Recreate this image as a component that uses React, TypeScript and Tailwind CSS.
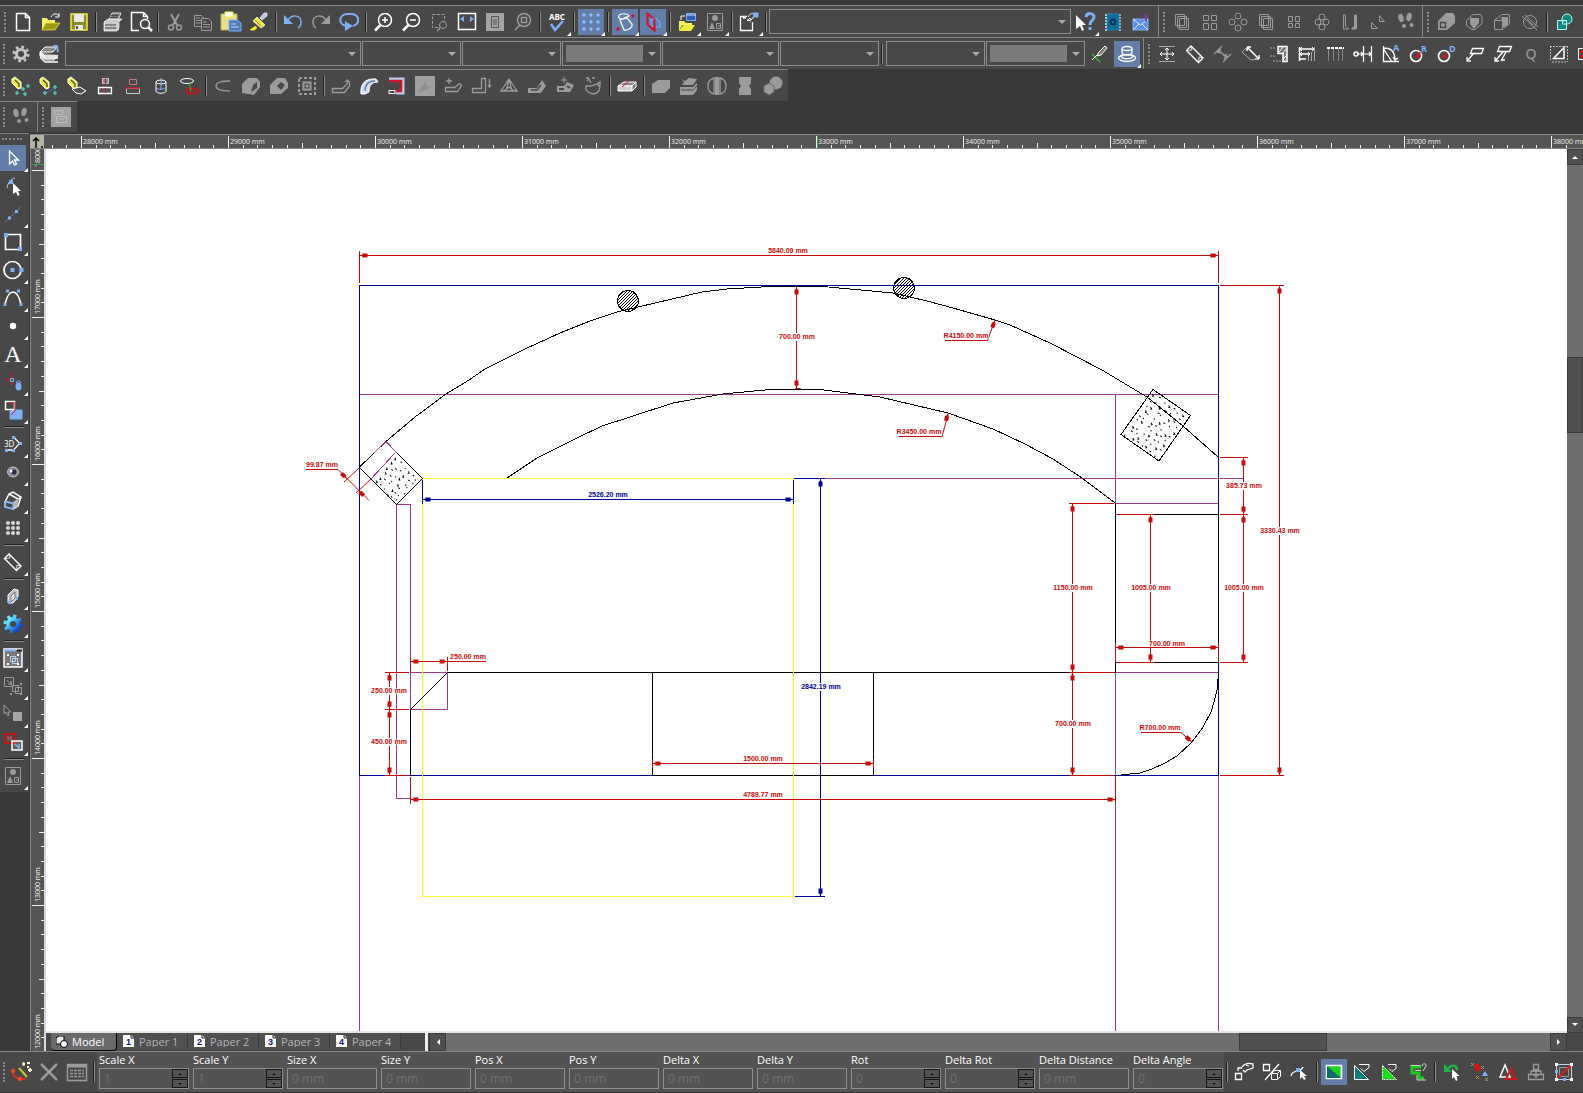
import React, { ReactNode } from "react";

const B = "#7db0f7";
const Y = "#f0ec3c";
const R = "#d0152b";

/* ---------- icons, drawn on a 20 x 20 grid ---------- */

const steps = (
  <g fill="currentColor" stroke="none">
    <ellipse cx="5" cy="6" rx="2.6" ry="4.2" transform="rotate(-15 5 6)" />
    <ellipse cx="13" cy="5" rx="2.6" ry="4.2" transform="rotate(15 13 5)" />
    <circle cx="8" cy="14" r="2" />
    <circle cx="15.500" cy="13" r="2" />
  </g>
);
const magnifier = (
  <>
    <circle cx="12" cy="8" r="6.500" strokeWidth="1.500" />
    <path d="M7.500 13 2 18.500" strokeWidth="2.500" />
  </>
);
const tag = (
  <>
    <path d="M1 3 4 1l6 5v6l-3 1-6-6z" fill={Y} stroke="#fff" />
    <path d="m4 4 4 4v3" stroke="#555" strokeWidth="1.500" />
  </>
);
const plusAt = (x: number, y: number) => (
  <path key={`${x}-${y}`} d={`M${x - 2} ${y}h4M${x} ${y - 2}v4`} stroke="#4fc3b0" strokeWidth="1.500" />
);
const shapes = (
  <>
    <path d="M2.500 1.500h15v17h-15z" />
    <g fill="currentColor" stroke="none">
      <circle cx="10" cy="6" r="3" />
      <path d="m7 10 3 7H4z" />
    </g>
    <path d="M11.500 11.500h4v5h-4zM13 14h3" />
  </>
);
const ruler = (
  <>
    <path d="M6 2 18 14l-4.500 4.500L1.500 6.500z" strokeWidth="1.400" />
    <path d="m6 2 1 4-5 .5M18 14l-4-1-.5 5" strokeWidth=".8" />
  </>
);

const icons: Record<string, ReactNode> = {
  new: <path d="M3.500 1.500h9l4 4v13h-13zM12.500 1.500v4h4" strokeWidth="1.500" />,
  open: (
    <>
      <path d="M1 6h5l1 2h7v3H5l-4 7z" fill="#f4f06a" stroke="none" />
      <path d="M5 11h14l-5 7H1z" fill="#9c9a1c" stroke={Y} strokeWidth=".7" />
      <path d="M10 5c2-4 6-4 8-1m0-3v4h-4" />
    </>
  ),
  save: (
    <>
      <path d="M2 2h16v16H2z" fill="#8c8a2a" stroke={Y} strokeWidth="1.500" />
      <path d="M5 2h10v8H5zM6 13h8v5H6z" fill="#e8e8e8" stroke="none" />
      <path d="M7 14h2v3H7z" fill="#555" stroke="none" />
    </>
  ),
  print: (
    <>
      <path d="M6 8 9 1h9l-3 7z" fill="#777" stroke="#ddd" />
      <path d="M1 10l4-3h14l-3 4v6l-2 2H1z" fill="#c9c9c9" stroke="#fff" strokeWidth=".7" />
      <path d="M2 13h11M2 16h11M8 3.500h7M7 5.500h7M16 11l3-3v6l-3 3" stroke="#444" />
    </>
  ),
  preview: (
    <>
      <path d="M8 18.500H.5v-18h12l4 4V7M12.500.5v4h4" strokeWidth="1.500" />
      <circle cx="14" cy="12" r="4.500" strokeWidth="1.500" />
      <path d="m17 15 4 4" strokeWidth="2.500" />
    </>
  ),
  cut: (
    <>
      <path d="m6 2 6 11M14 2 8 13" strokeWidth="2" />
      <circle cx="6" cy="15.500" r="2.500" strokeWidth="1.500" />
      <circle cx="14" cy="15.500" r="2.500" strokeWidth="1.500" />
    </>
  ),
  copy: (
    <>
      <path d="M1.500 3.500h7l3 3v8h-10z" />
      <path d="M8.500 6.500h7l3 3v9h-10z" fill="#484848" />
      <path d="M3 6h4M3 8.500h5M3 11h5M10 10h4M10 12.500h7M10 15h7" />
    </>
  ),
  paste: (
    <>
      <path d="M0 2h16v16H0z" fill="#e6e08a" stroke="#b9b35c" />
      <path d="M4 0h8v5H4z" fill="#fff" stroke={Y} />
      <path d="M8 8h8l4 3v8H8z" fill="#4f79b5" stroke={B} />
      <path d="M10 12h5M10 15h8" stroke="#cfe2ff" />
    </>
  ),
  brush: (
    <>
      <path d="M15 1h3v3l-5 4-2-2z" fill="#b8cbe6" stroke="#fff" strokeWidth=".6" />
      <path d="m8 5 8 8-4 3-8-7z" fill={Y} stroke="#fff" strokeWidth=".7" />
      <path d="m6 8 6 6" stroke="#8c8a2a" />
      <path d="M1 17c3 0 3-3 6-3l1 2c-2 3-5 3-7 2z" fill="#f7f71c" stroke="none" />
    </>
  ),
  undo: (
    <>
      <path d="M1 3v9h9z" fill={B} stroke="none" />
      <path d="M5 8c4-6 13-5 13 2 0 3-1 5-3 6" stroke={B} strokeWidth="1.500" />
    </>
  ),
  redo: (
    <>
      <path d="M19 3v9h-9z" fill="currentColor" stroke="none" />
      <path d="M15 8C11 2 2 3 2 10c0 3 1 5 3 6" strokeWidth="1.500" />
    </>
  ),
  repeat: (
    <>
      <path d="M8 14C-1 13-1 3 8 2h5c8 1 8 10 1 12" stroke={B} strokeWidth="2" />
      <path d="M6 9v10l8-5z" fill={B} stroke="none" />
    </>
  ),
  zoomin: (
    <>
      {magnifier}
      <path d="M12 5v6M9 8h6" strokeWidth="1.500" />
    </>
  ),
  zoomout: (
    <>
      {magnifier}
      <path d="M9 8h6" strokeWidth="1.500" />
    </>
  ),
  zoomwin: (
    <>
      <path d="M3.500 2.500h12v13h-12z" strokeDasharray="3 1.500" />
      <circle cx="14" cy="13" r="3.500" fill="#484848" />
      <path d="m11 16-3 3" strokeWidth="1.500" />
    </>
  ),
  extents: (
    <>
      <path d="M1.500 1.500h17v16h-17z" strokeWidth="1.500" />
      <path d="M7 4v6L3 7zM13 4v6l4-3z" fill={B} stroke="none" />
    </>
  ),
  page: (
    <>
      <path d="M1 1h18v18H1z" fill="#a4a4a4" stroke="none" />
      <path d="M6.500 4.500h7v11h-7zM8 8h4M8 10h4M8 12h4" stroke="#555" />
    </>
  ),
  zoomsel: (
    <>
      <circle cx="11" cy="8" r="6.500" strokeWidth="1.500" />
      <path d="M8.500 5.500h5v5h-5zM7 13l-5 5" strokeWidth="1.500" />
    </>
  ),
  spell: (
    <>
      <text x="10" y="8" fontSize="8" fontWeight="bold" textAnchor="middle" fill="#fff" stroke="none">
        ABC
      </text>
      <path d="m4 12 4 6 8-9" stroke={B} strokeWidth="2.500" />
    </>
  ),
  grid: (
    <g fill="#8fc0ff" stroke="none">
      {[3, 10, 17].map((y) => [3, 10, 17].map((x) => <circle key={`${x}${y}`} cx={x} cy={y} r="1.700" />))}
    </g>
  ),
  snap: (
    <>
      <path d="M4 4c0-3 9-3 10 0L7 7C4 7 3 5 4 4zM5 8l7-2 5 6c1 3-4 7-8 6z" strokeWidth="1.200" />
      <circle cx="18" cy="4" r="1.800" fill={R} stroke="none" />
      <circle cx="3" cy="17" r="1.800" fill={R} stroke="none" />
    </>
  ),
  plane: (
    <>
      <path d="M4.500 1.500v11l7 6v-11z" stroke={R} strokeWidth="2" />
      <path d="M8 7h6l3 3v5h-7l-2-2z" fill="#5d84c4" stroke={B} />
      <path d="M11.500 7v11" stroke={R} strokeWidth="2" />
    </>
  ),
  layerset: (
    <>
      <path d="M9.500 1.500h9v7h-9z" fill="#2f5fae" stroke={B} />
      <path d="M9 3h10" stroke="#cfe2ff" />
      <path d="M2 9h5l2 2h6v2H5l-3 6z" fill="#f7f46a" stroke="none" />
      <path d="M6 13h12l-4 6H2z" fill={Y} stroke="none" />
      <path d="M4 8V4h4" />
    </>
  ),
  shapes,
  props: (
    <>
      <path d="M8 4.500H1.500v14h12V10M4 6h3" strokeWidth="1.300" />
      <path d="M9 5c2-4 5-4 8-3l-5 6-1-2-3 3M8 8l4 1" />
      <path d="M14 1h5v4h-4z" fill={B} stroke={B} />
    </>
  ),
  help: (
    <>
      <path d="M1 3v14l4-3 2 5 2-1-2-5h4z" fill="#fff" stroke="none" />
      <path d="M11 5c1-5 8-4 8 0 0 4-4 3-4 8M15 15v3" stroke={B} strokeWidth="3" />
    </>
  ),
  book: (
    <>
      <path d="M4 2h12v16H4z" fill="#0a6c9e" stroke="#1683b5" />
      <path d="M3 2v17" stroke="#dfe9ee" strokeWidth="1.500" strokeDasharray="2 1" />
      <path d="M17 2v17" stroke="#b7c4ca" strokeWidth="1.500" strokeDasharray="2 1" />
      <circle cx="10" cy="10" r="2.500" stroke="#052c48" strokeWidth="1.500" />
    </>
  ),
  mail: (
    <>
      <path d="M2 7h15v11H2z" fill="#5c8fe6" stroke={B} />
      <path d="m2 7 7.500 6L17 7M2 18l6-6M17 18l-6-6" stroke="#dbe9ff" />
      <path d="m12 5 3-4 3 4h-2v4h-2V5z" fill="#7a3b95" stroke="none" />
    </>
  ),
  dup: <path d="M3.500 2.500h9v11h-9zM5.500 4.500h9v11h-9zM7.500 6.500h9v11h-9z" />,
  array4: <path d="M3.500 3.500h5v5h-5zM11.500 3.500h5v5h-5zM3.500 11.500h5v6h-5zM11.500 11.500h5v6h-5z" />,
  polar: (
    <>
      <circle cx="10" cy="4" r="3" />
      <circle cx="4" cy="10" r="3" />
      <circle cx="16" cy="10" r="3" />
      <circle cx="10" cy="16" r="3" />
    </>
  ),
  arraysm: <path d="M4.500 4.500h4v5h-4zM11.500 4.500h4v5h-4zM4.500 11.500h4v4h-4zM11.500 11.500h4v4h-4z" />,
  flower: (
    <>
      <circle cx="10" cy="5" r="3" />
      <circle cx="6" cy="10" r="3" />
      <circle cx="14" cy="10" r="3" />
      <circle cx="10" cy="15" r="3" />
    </>
  ),
  mirror: (
    <>
      <path d="M3.500 3v14h5l-3-3V3z" />
      <path d="M16.500 3v14h-5l3-3V3z" fill="currentColor" />
    </>
  ),
  triangles: (
    <>
      <path d="M3.500 10.500v6h6z" />
      <path d="M11.500 3.500v6h5z" />
    </>
  ),
  steps,
  union: (
    <>
      <path d="M2 9 10 1h7l2 3v7l-8 7H2z" fill="currentColor" stroke="none" />
      <path d="M4.500 10.500h5v5h-5z" stroke="#484848" strokeWidth="1.500" />
    </>
  ),
  subtract: (
    <>
      <path d="M6 6h9v5l-5 6-4-5z" fill="currentColor" stroke="none" />
      <path d="M2.500 8.500 9 2.500h8l1 3v6l-7 6h-3l-5.500-4z" />
    </>
  ),
  intersect: (
    <>
      <path d="M10 5h6v8l-6 3z" fill="currentColor" stroke="none" />
      <path d="M2.500 8.500h8v9h-8zM2.500 8.500l7-6h8v9l-6 5M8 6h8" />
    </>
  ),
  slice: (
    <>
      <circle cx="10" cy="10" r="6.500" />
      <path d="m2 4 15 14M5 3l13 12M7 7l6 6" />
    </>
  ),
  join: (
    <>
      <circle cx="13" cy="7" r="5" fill="#0c8a80" stroke="#bff5ef" />
      <path d="M3.500 8.500h9v9h-9z" fill="#0c8a80" stroke="#bff5ef" />
      <path d="M8.500 12V9l4-.5V12z" fill="#0c8a80" stroke="#bff5ef" />
    </>
  ),
  joinb: <path d="M2 7h14v11H2z" fill={B} stroke="none" />,
  gear: (
    <g stroke="#c4c4c4">
      <circle cx="10" cy="10" r="4.500" strokeWidth="3" />
      <circle cx="10" cy="10" r="7" strokeWidth="3" strokeDasharray="2.750 2.750" />
    </g>
  ),
  layers: (
    <>
      <path d="m1 8 5-5h12l-4 5zM1 8v4l6 4h8l4-5" fill="#888" />
      <path d="m1 10 5 4h13M1 13l5 5h13M1 8l5 4h13" strokeWidth="1.500" />
      <path d="M14 2h4l1 6" stroke={B} strokeWidth="2" />
    </>
  ),
  pencil: (
    <>
      <path d="m3 10 8 8" stroke="#35c435" strokeWidth="1.500" />
      <path d="m8 12 2-4 6-6 2 2-6 7z" fill="#777" />
      <path d="m3 16 5-5" />
    </>
  ),
  pancake: (
    <>
      <ellipse cx="10" cy="14" rx="8.500" ry="3.500" strokeWidth="1.300" />
      <path d="M4 11c0 5 12 5 12 0M5 5v3c0 4 10 4 10 0V5" strokeWidth="1.300" />
      <ellipse cx="10" cy="4.500" rx="5" ry="2" strokeWidth="1.300" />
    </>
  ),
  dimall: (
    <>
      <path d="M2 2.500h16M2 17.500h16" stroke="#aaa" />
      <path d="M10 4v12M3 10h14M8 6l2-2 2 2M8 14l2 2 2-2M5 8l-2 2 2 2M15 8l2 2-2 2" />
    </>
  ),
  ruler,
  dimpar: <path d="m1 10 8-8M10 18l8-8M4 6l11 7M8 5l-3 4M14 10l-3 5M4 8l5 1M10 11l4 2" strokeWidth="1.300" />,
  dimalign: (
    <>
      <path d="m6 3 12 12M6 3v4M6 3h4M18 15v-4M18 15h-4" strokeWidth="1.500" />
      <path d="m6 3-5 5 9 8 7-1" stroke="#aaa" />
    </>
  ),
  dimhatch: (
    <>
      <path d="M9 2.500h9v15h-4v-8H9z" fill="#777" strokeWidth="1.500" />
      <path d="m10 8 4-5M13 10l5-6M14 15l4-4" />
      <path d="M1 4h6M1 12h6M4 17h9" stroke="#aaa" strokeDasharray="2 1" />
    </>
  ),
  dimbase: (
    <>
      <path d="M2.500 3v14M2 5h15M3 10h10M3 15h6" strokeWidth="1.500" />
      <path d="m5 3-2 2 2 2M15 3l2 2-2 2M5 8l-2 2 2 2M11 8l2 2-2 2" />
      <path d="M17.500 3v14M14.500 8v9M11.500 12v5" stroke="#aaa" />
    </>
  ),
  dimcont: (
    <>
      <path d="M3.500 4v13M8.500 4v13M13.500 4v13M17.500 4v13" stroke="#888" />
      <path d="M2 4h17" strokeWidth="2" strokeDasharray="3 1" />
    </>
  ),
  dimord: (
    <>
      <circle cx="3" cy="10" r="2" strokeWidth="1.500" />
      <path d="M5 10h14M10.500 2v16M18.500 2v16M8 8l2 2-2 2M16 8l2 2-2 2" strokeWidth="1.200" />
    </>
  ),
  dimang: (
    <>
      <path d="M2.500 2v15.500H18M2.500 5l8 12M3 4c8 0 11 4 11 12M12 13l2 3 3-2" strokeWidth="1.300" />
      <text x="12" y="7" fontSize="9" fontWeight="bold" fill={B} stroke="none">A</text>
    </>
  ),
  dimrad: (
    <>
      <circle cx="7" cy="12" r="5.500" strokeWidth="1.700" />
      <path d="M6 13l5-5v5z" fill={R} stroke={R} />
      <text x="12" y="8" fontSize="9" fontWeight="bold" fill={B} stroke="none">R</text>
    </>
  ),
  dimdia: (
    <>
      <circle cx="7" cy="12" r="5.500" strokeWidth="1.700" />
      <path d="M4 14l5-5v4z" fill={R} stroke={R} />
      <text x="12" y="8" fontSize="9" fontWeight="bold" fill={B} stroke="none">D</text>
    </>
  ),
  leader: <path d="M7.500 4.500h11l-2 5h-11zM9 9l-7 8M2 13v4h4" strokeWidth="1.300" />,
  leader2: <path d="M6.500 2.500h12l-2 5h-12zM10 8l-8 9M2 13v4h4M13 8l-5 9M9 16h3" strokeWidth="1.300" />,
  q: <text x="10" y="15" fontSize="14" textAnchor="middle" fill="#a0a0a0" stroke="none">Q</text>,
  dimdiag: (
    <>
      <path d="M4.500 14.500 15 3.500v11z" strokeWidth="1.500" />
      <path d="M1 2.500h17M1.500 2v14M18.500 2v16M3 18h14" stroke="#bbb" strokeDasharray="2 1" />
    </>
  ),
  redtable: (
    <>
      <path d="M1.500 4.500h17v11h-17z" stroke="#fff" />
      <path d="M3 6h5v3H3zM3 11h5v3H3z" fill="#d01" stroke="none" />
    </>
  ),
  tag1: (
    <>
      {tag}
      {plusAt(6, 17)}
      {plusAt(12, 13)}
      {plusAt(17, 10)}
      {plusAt(14, 18)}
    </>
  ),
  tag2: (
    <>
      {tag}
      <path d="M6 17 17 12" stroke="#3a73c9" />
      {plusAt(6, 17)}
      {plusAt(16, 17)}
      {plusAt(16, 11)}
    </>
  ),
  tag3: (
    <>
      {tag}
      <path d="m5 13 8-2 6 4-5 3-5-1z" fill="#555" />
    </>
  ),
  stamp: (
    <>
      <path d="M7.500 2.500h6v5h-6z" fill="#888" stroke="#ccc" />
      <path d="M3.500 11.500h13v6h-13z" fill="#555" stroke="#fff" strokeWidth="1.300" />
      <path d="M10.500 1v8M10.500 12v5" stroke={R} />
    </>
  ),
  stampred: (
    <>
      <path d="M6.500 3.500h7v5h-7z" stroke="#c9777f" />
      <path d="M3.500 12.500h13v5h-13z" stroke="#ccc" />
      <path d="M3 12h14" stroke={R} strokeWidth="1.500" />
    </>
  ),
  cylinder: (
    <>
      <path d="M5 6v9c0 3 10 3 10 0V6" />
      <ellipse cx="10" cy="6" rx="5" ry="2" />
      <path d="M5 11c0 3 10 3 10 0M10 2v12" stroke={B} />
    </>
  ),
  revolve: (
    <>
      <ellipse cx="8" cy="5" rx="6.500" ry="2.500" />
      <ellipse cx="13" cy="15" rx="6" ry="2.500" stroke="#c01818" strokeWidth="2" />
      <path d="m10 6 2 9" stroke="#35c435" />
    </>
  ),
  curve: <path d="M17 5c-7 0-14 1-14 5s7 5 14 5" strokeWidth="1.300" />,
  solid1: (
    <>
      <path d="M1 8 7 2h9l3 4v5l-6 8-12-2z" fill="currentColor" stroke="none" />
      <path d="m12 9 4-3v6l-6 4z" fill="#484848" stroke="none" />
    </>
  ),
  solid2: (
    <>
      <path d="M1 9 8 2h8l3 5v5l-7 6H1z" fill="currentColor" stroke="none" />
      <path d="m8 10 4-4 4 3-4 5z" fill="#484848" stroke="none" />
    </>
  ),
  marquee: (
    <>
      <path d="M2 2h16v16H2z" strokeWidth="2" strokeDasharray="3 2" />
      <path d="M6.500 6.500h7v7h-7z" strokeWidth="2" />
      <path d="M9 9h2v2H9z" fill="currentColor" />
    </>
  ),
  sweep: <path d="M1.500 12.500h10l5-5V4l2 2v4l-5 6.500h-12zM14 6l3-2" strokeWidth="1.300" />,
  pipe: (
    <>
      <path d="M2 18C1 8 6 2 17 3l2 3c-7 0-9 4-9 10l-4 2z" fill="#cfe0f5" stroke="#fff" />
      <path d="M6 15C6 8 10 5 16 5" stroke="#6b7f99" strokeWidth="1.500" />
    </>
  ),
  channel: (
    <>
      <path d="M2 3h14v14H9" stroke="#b9cdea" strokeWidth="3" />
      <path d="M2 5h12v10H8" stroke={R} strokeWidth="2.500" />
      <path d="M2 14.500h6v3H2z" stroke="#fff" fill="#484848" />
    </>
  ),
  facet: (
    <>
      <path d="M0 0h20v20H0z" fill="#a0a0a0" stroke="none" />
      <path d="m3 17 7-11 2 5 6-1-8 4z" fill="#8c8c8c" stroke="none" />
    </>
  ),
  bend1: <path d="M6 2v6M3 5h6M2.500 11.500h9l5-4 2 2-4 6h-12z" strokeWidth="1.300" />,
  bend2: <path d="M1.500 12.500h9v-10h4v14h-13zM18.500 3v8M17 9l1.500 2L20 9" strokeWidth="1.300" />,
  cone: <path d="m10 3 8 12H2zM10 3l3 12H7zM5 15l5-4 5 4" strokeWidth="1.300" />,
  bend3: (
    <>
      <path d="M1 12h9l5-8 4 6-5 7H1z" fill="currentColor" stroke="none" />
      <path d="M4 14h6l4-5M14 3l1-2" stroke="#484848" strokeWidth="1.500" />
    </>
  ),
  bend4: (
    <>
      <path d="M2 10h7l3-4 7 3-4 7H2z" fill="currentColor" stroke="none" />
      <path d="M4 13h5M12 10l3 2" stroke="#484848" strokeWidth="2" />
      <path d="M9 1v6M6 4h6" />
    </>
  ),
  twist: <path d="M3 2h3M9 2h3M4 5l2-2 2 4M3 10c-2 8 13 12 14 1l-3-3-6 2zM14 8l3-2v4" strokeWidth="1.300" />,
  section: (
    <>
      <path d="m1 10 6-4h12l-4 4z" fill="#8a8a8a" stroke="#fff" />
      <path d="M1 10h14v5H1z" fill="#cfcfcf" stroke="#fff" />
      <path d="m15 10 4-4v5l-4 4z" fill="#777" stroke="#fff" />
      <path d="m5 11 9-8" stroke={R} />
    </>
  ),
  box: <path d="m1 8 6-4h12v8l-5 5H1z" fill="currentColor" stroke="none" />,
  boxcurve: (
    <>
      <path d="M1 11h13l4-4v7l-4 5H1z" fill="currentColor" stroke="none" />
      <path d="m2 3 4 2 4-3 8 1-4 6H3l2-3z" fill="currentColor" stroke="none" />
      <path d="M2 14h12l4-4" stroke="#484848" />
    </>
  ),
  mirrorc: (
    <>
      <path d="M7 2v16C-1 16-1 4 7 2zM13 2v16c8-2 8-14 0-16z" strokeWidth="1.300" />
      <path d="M8 1h4v18H8z" fill="currentColor" stroke="none" />
    </>
  ),
  column: <path d="M4 1h12v6l-2 3 2 3v6H4v-6l2-3-2-3z" fill="currentColor" stroke="none" />,
  cubeball: (
    <>
      <circle cx="13" cy="7" r="6.500" fill="currentColor" stroke="none" />
      <path d="m1 10 5-3 5 3v6l-5 3-5-3z" fill="currentColor" stroke="#6a6a6a" />
    </>
  ),
  panel: (
    <>
      <path d="M0 0h20v20H0z" fill="#a2a2a2" stroke="none" />
      <path d="M3.500 3.500h8v4h-8zM5.500 9.500h10v6h-10zM8 12h5" stroke="#bdbdbd" />
    </>
  ),
  cursor: <path d="M6.500 3v13l3-3 2 4 2-1-2-4h4z" fill="#6681ab" strokeWidth="1.300" />,
  node: (
    <>
      <path d="M4 12c1-6 4-9 8-10" stroke="#ccc" />
      <path d="M6 4h4v4H6z" fill={B} stroke="none" />
      <path d="M10 7v11l3-2 2 4 1.500-1L15 15h3z" fill="#fff" stroke="none" />
    </>
  ),
  line: (
    <>
      <path d="M2 18 18 3" stroke="#7d8a9c" strokeDasharray="2 1" />
      <path d="M5 12.500h3v3H5zM12 6h3v3h-3z" fill={B} stroke="none" />
    </>
  ),
  rect: (
    <>
      <path d="M2.500 2.500h15v15h-15z" strokeWidth="1.700" />
      <path d="M1 1h4v4H1zM15 15h4v4h-4z" fill={B} stroke="none" />
    </>
  ),
  circle: (
    <>
      <circle cx="9.500" cy="10" r="8.500" strokeWidth="1.700" />
      <path d="M7.500 8h4v4h-4zM16.500 8h4v4h-4z" fill={B} stroke="none" />
    </>
  ),
  arc: (
    <>
      <path d="M2 16C4 8 7 4 10 4s6 4 8 12" strokeWidth="1.700" />
      <path d="M.5 15h3v3h-3zM16.500 15h3v3h-3zM3 1.500h3v3H3zM14 1.500h3v3h-3z" fill={B} stroke="none" />
    </>
  ),
  dot: <circle cx="10" cy="10" r="3.200" fill="#fff" stroke="none" />,
  text: (
    <text x="10" y="18" fontSize="24" textAnchor="middle" fill="#fff" stroke="none" fontFamily="Liberation Serif, serif">
      A
    </text>
  ),
  lock: (
    <>
      <path d="M8.500 1v4M8.500 10v3M2 7.500h5" stroke={R} strokeWidth="1.500" />
      <path d="M7.500 6.500h3v3h-3z" stroke={B} />
      <ellipse cx="15.500" cy="14.500" rx="3" ry="4" fill={B} stroke="none" />
      <path d="M13.500 11c0-3 4-3 4 0" stroke={B} />
    </>
  ),
  copyred: (
    <>
      <path d="M7 10h12v9H7z" fill={B} stroke={B} />
      <path d="M2.500 1.500h9v8h-9z" strokeWidth="1.500" />
      <path d="M5 3h7v8l-4 4" stroke={R} />
    </>
  ),
  threed: (
    <>
      <text x="1" y="13" fontSize="8" fill="#fff" stroke="none">3D</text>
      <path d="M11 4c2 0 3 4 6 5-3 2-4 6-7 7H4" strokeWidth="1.300" />
      <path d="M9 2h3v3H9zM16 8h3v3h-3zM9 15h3v3H9zM2 15h3v3H2z" fill={B} stroke="none" />
    </>
  ),
  sphere: (
    <>
      <ellipse cx="10" cy="10" rx="5.500" ry="5" fill="#8a8a9c" stroke="#c4c4d0" />
      <circle cx="11" cy="10" r="2.500" fill="#2a2a40" stroke="none" />
      <circle cx="8" cy="9" r="1.500" fill="#fff" stroke="none" />
    </>
  ),
  prism: (
    <>
      <path d="m2 12 4-8 4-2 8 5-3 9-5 3-8-2z" strokeWidth="1.500" />
      <path d="m6 4 9 5 3-2M2 12l9 1" strokeWidth="1.500" />
      <path d="m10 12 6-4-2 9-4 1z" fill="#b8b8b8" stroke="none" />
      <path d="m2 12 8 1v6l-8-2z" stroke={B} strokeWidth="1.500" />
    </>
  ),
  balls: (
    <g fill="#d6d6d6" stroke="none">
      {[5, 10, 15].map((y) => [5, 10, 15].map((x) => <circle key={`${x}${y}`} cx={x} cy={y} r="2" />))}
    </g>
  ),
  slab: (
    <>
      <path d="m5 9 6-6 4 1v7l-5 6H5z" fill="#b9bec6" stroke="#fff" />
      <path d="m8 10 4-4v6l-4 4z" fill="#e6e6e6" stroke="#777" />
      <path d="M5 15h3v3H5zM13 11h2v3h-2z" fill={B} stroke="none" />
    </>
  ),
  gearblue: (
    <>
      <defs>
        <linearGradient id="gearFill" gradientUnits="userSpaceOnUse" x1="3" y1="3" x2="17" y2="17">
          <stop offset="0.200" stopColor="#63f0ff" />
          <stop offset="0.900" stopColor="#0a3fd8" />
        </linearGradient>
      </defs>
      <circle cx="10" cy="10" r="5" stroke="url(#gearFill)" strokeWidth="4" />
      <circle cx="10" cy="10" r="8" stroke="url(#gearFill)" strokeWidth="3" strokeDasharray="3.140 3.140" />
    </>
  ),
  groupwin: (
    <>
      <path d="M1 1h18v18H1z" fill="#777" stroke="#fff" strokeWidth="1.500" />
      <path d="M1 2.500h12" stroke={B} strokeWidth="2" />
      <path d="M14 2.500h5" stroke="#223" strokeWidth="2" />
      <path d="M7.500 8.500h5v5h-5zM9.500 10.500h5v5h-5z" stroke="#bcd3f5" />
      <path d="M4 6h2v2H4zM14 6h2v2h-2zM4 15h2v2H4zM14 15h2v2h-2z" fill="#fff" stroke="none" />
    </>
  ),
  groupin: (
    <>
      <path d="M1.500 1.500h9v9h-9zM4 4l4 4M8 5v3H5" />
      <path d="M9.500 9.500h6v6h-6zM12.500 11.500h6v6h-6z" />
      <path d="M7 7h2v2H7zM17 7h2v2h-2zM7 17h2v2H7zM17 17h2v2h-2z" fill="currentColor" stroke="none" />
    </>
  ),
  pickbox: (
    <>
      <path d="M1 1v9l2-2 2 4 1-1-1-3h3z" />
      <path d="M10 8h9v9h-9z" fill="#a6a6a6" stroke="none" />
    </>
  ),
  swap: (
    <>
      <path d="M2 2h10v9H2z" stroke="#c01818" strokeWidth="2" />
      <path d="M5 4v5M8 4v5M5 6h3" stroke="#e05a5a" />
      <path d="M9 9h10v9H9z" fill="#fff" fillOpacity=".15" strokeWidth="1.500" />
      <path d="m12 12 4 4v-4" stroke={B} strokeWidth="1.500" />
    </>
  ),
  wizard: (
    <>
      <path d="M2 8c-1 6 2 9 12 9" stroke="#e0301a" strokeWidth="2" />
      <circle cx="2" cy="9" r="2.200" fill="#f0452a" stroke="none" />
      <circle cx="9" cy="17" r="2.200" fill="#f0452a" stroke="none" />
      <path d="m8 6 8 9" stroke="#c9c92a" strokeWidth="2" />
      <path d="M11 2h3M12.500 0v4M16 1h3M17 8h4M19 6v4M16 5h2" stroke="#fbfbd0" strokeWidth="1.800" />
    </>
  ),
  cross: <path d="m2 2 16 16M18 2 2 18" strokeWidth="2.500" />,
  table: (
    <>
      <path d="M.5 2.500h19v16H.5z" strokeWidth="1.500" />
      <path d="M1 4h18" strokeWidth="3" />
      <path d="M3 8.500h14M3 11.500h14M3 14.500h14" strokeWidth="1.500" strokeDasharray="3 1" />
    </>
  ),
  b1: <path d="M1.500 11.500h6v6h-6zM4 9V6h4M8 5c3-4 6-4 11-3v4l-6 2-2 2-2-2M12 3l3 1" strokeWidth="1.300" />,
  b2: (
    <>
      <path d="M1.500 2.500h6v6h-6zM17 2 3 18" strokeWidth="1.300" />
      <path d="M9.500 11.500h6v6h-6zM9.500 11.500l3-3h6v6l-3 3M15.500 11.500l3-3" />
    </>
  ),
  b3: (
    <>
      <path d="M1 14c2-8 9-2 12-9" strokeWidth="1.300" />
      <path d="M10 8v9l2-2 2 3 2-1-2-3h3z" fill="#fff" stroke="none" />
      <path d="M6 6h4v4H6z" fill={B} stroke="none" />
    </>
  ),
  sel1: (
    <>
      <path d="M2.500 3.500h15v13h-15z" fill="#1cd61c" stroke="#fff" strokeWidth="1.700" />
      <path d="m3 4 14 12H3z" fill="#0b6e6a" stroke="none" />
    </>
  ),
  sel2: (
    <>
      <path d="M2.500 3.500v14h14z" fill="#0b7d79" stroke="#fff" />
      <path d="M7 2.500h10v3l-5 4-3-3" />
    </>
  ),
  sel3: (
    <>
      <path d="M2.500 3.500v14h14z" fill="#18e018" stroke="#fff" strokeDasharray="2 1" />
      <path d="M8 2.500h8v4l-4 3-3-3" />
    </>
  ),
  sel4: (
    <>
      <path d="M13 5H4v6h7v5h5" stroke="#1fc81f" strokeWidth="3" />
      <path d="M2.500 3.500h10M7 8.500h6M14 4c0-3 5-3 4 0l-3 5M9 13v5h9" stroke="#cfd8cf" />
    </>
  ),
  und2: (
    <>
      <path d="M2 2v8h8z" fill="#25b04a" stroke="none" />
      <path d="M6 7c3-5 9-4 9 1" stroke="#25b04a" strokeWidth="2.500" />
      <path d="M10 7v10l2-2 2 4 1.500-1-1-4h3z" fill="#fff" stroke="none" />
    </>
  ),
  swapc: (
    <>
      <path d="M4 2h5l2 7H5z" fill="#d01818" stroke="none" />
      <path d="m15 9 3 5h-6z" fill={B} stroke="none" />
      <path d="m1 1 3 3M4 1 1 4M11 4l3 3M14 4l-3 3M6 14l3 3M9 14l-3 3M15 16l3 3M18 16l-3 3" stroke="#b0a060" />
    </>
  ),
  tri2: (
    <>
      <path d="m7 3 5 12H2z" strokeWidth="1.500" />
      <path d="m13 7 5 10H8z" stroke="#d01818" strokeWidth="2" />
    </>
  ),
  press: <path d="M7.500 2.500h5v5h-5zM10 8v5M5 12V9h10v3M2.500 12.500h15v5h-15zM7 12l3 3 3-3" strokeWidth="1.300" />,
  bbox: (
    <>
      <path d="M2.500 2.500h15v15h-15z" stroke="#c4d4ea" />
      <path d="M5.500 5.500h9v9h-9z" stroke="#999" />
      <path d="m4 16 13-13" stroke="#e01818" strokeWidth="2" />
      <path d="M1 1h3v3H1zM16 1h3v3h-3zM1 16h3v3H1zM16 16h3v3h-3z" fill="#fff" stroke="none" />
      <path d="M1 8h3v3H1zM9 16h3v3H9z" fill={B} stroke="none" />
    </>
  ),
};

function Icon({ name }: { name: string }) {
  return (
    <svg
      viewBox="0 0 20 20"
      className="size-5 overflow-visible"
      fill="none"
      stroke="currentColor"
      strokeWidth="1"
      fontFamily="Noto Sans, sans-serif"
      aria-hidden="true"
    >
      {icons[name]}
    </svg>
  );
}

/* ---------- toolbar pieces ---------- */

/* Item syntax: "name", "name:flags" with d = disabled, a = active, m = has menu; "|" is a separator. */
function Tools({ items, vertical = false }: { items: string; vertical?: boolean }) {
  return (
    <>
      {items.split(" ").map((item, i) => {
        if (item === "|")
          return vertical ? (
            <div key={i} className="flex h-[6px] w-7 shrink-0 items-center px-1">
              <div className="h-[2px] w-full border-t border-[#1f1f1f] bg-[#8c8c8c]" />
            </div>
          ) : (
            <Separator key={i} />
          );
        const [name, flags = ""] = item.split(":");
        return (
          <button
            key={i}
            type="button"
            aria-label={name}
            disabled={flags.includes("d")}
            className={`relative flex size-7 shrink-0 items-center text-white disabled:text-[#9b9b9b] ${vertical ? "justify-start" : "justify-center"}`}
          >
            <span
              className={
                flags.includes("a")
                  ? "flex size-[26px] items-center justify-center bg-[#637ea8]"
                  : "flex size-[26px] items-center justify-center"
              }
            >
              <Icon name={name} />
            </span>
            {flags.includes("m") && (
              <svg viewBox="0 0 4 4" className="absolute right-0 bottom-0 size-1" aria-hidden="true">
                <path d="M4 0v4H0z" fill="#fff" />
              </svg>
            )}
          </button>
        );
      })}
    </>
  );
}

function Separator() {
  return (
    <div className="flex w-[6px] shrink-0 justify-center">
      <div className="h-5 w-[2px] border-l border-[#1f1f1f] bg-[#8c8c8c]" />
    </div>
  );
}

function Grip({ wide = false }: { wide?: boolean }) {
  return (
    <div className={wide ? "flex w-[9px] shrink-0 justify-center" : "flex w-[7px] shrink-0 justify-center"}>
      <div className="h-5 border-l-2 border-dotted border-[#8c8c8c]" />
    </div>
  );
}

function Combo({ label, className, filled = false }: { label: string; className: string; filled?: boolean }) {
  return (
    <div className={`relative flex h-[25px] shrink-0 border border-[#8e8e8e] p-[3px] ${className}`}>
      <select
        aria-label={label}
        className={
          filled
            ? "mr-[14px] w-full appearance-none bg-[#7b7b7b] text-white"
            : "mr-[14px] w-full appearance-none bg-transparent text-white"
        }
      />
      <svg viewBox="0 0 8 4" className="pointer-events-none absolute top-[10px] right-1 h-1 w-2" aria-hidden="true">
        <path d="M0 0h8L4 4z" fill="#a8a8a8" />
      </svg>
    </div>
  );
}

/* ---------- rulers ---------- */

const STEP = 147;

function TopRuler() {
  return (
    <svg className="h-full w-full" fontFamily="Open Sans, sans-serif" fontSize="7" fill="#f2f2f2" shapeRendering="crispEdges">
      {Array.from({ length: 106 }, (_, i) => {
        const k = i - 4;
        const x = Math.round(37 + (k * STEP) / 10);
        const h = k % 10 === 0 ? 12 : k % 5 === 0 ? 5 : 3;
        return <rect key={k} x={x} y={13 - h} width="1" height={h} />;
      })}
      {Array.from({ length: 11 }, (_, k) => (
        <text key={k} x={39 + k * STEP} y="9">
          {28000 + k * 1000} mm
        </text>
      ))}
      <rect x="773" y="0" width="1" height="15" fill="#3f9c4f" />
    </svg>
  );
}

function SideRuler() {
  return (
    <svg className="h-full w-full" fontFamily="Open Sans, sans-serif" fontSize="7" fill="#f2f2f2" shapeRendering="crispEdges">
      {Array.from({ length: 61 }, (_, i) => {
        const y = Math.round(21 + (i * STEP) / 10);
        const w = i % 10 === 0 ? 12 : i % 5 === 0 ? 5 : 3;
        return <rect key={i} x={13 - w} y={y} width={w} height="1" />;
      })}
      {Array.from({ length: 7 }, (_, k) => (
        <text key={k} transform={`translate(9 ${18 + k * STEP}) rotate(-90)`}>
          {18000 - k * 1000} mm
        </text>
      ))}
      <rect x="0" y="15" width="15" height="1" fill="#3f9c4f" />
    </svg>
  );
}

/* ---------- drawing ---------- */

const RED = "#c80a0a";
const NAVY = "#00009c";
const PURPLE = "#a23a8c";

function Arrow({ x, y, angle }: { x: number; y: number; angle: number }) {
  return <path d="M0 0-3-1V-2H-8V2H-3V1z" transform={`translate(${x} ${y}) rotate(${angle})`} />;
}

function Label({ x, y, children }: { x: number; y: number; children: string }) {
  return (
    <text x={x} y={y + 2} textAnchor="middle" stroke="#fff" strokeWidth="1" paintOrder="stroke">
      {children}
    </text>
  );
}

function Dim({ x1, y1, x2, y2, tx, ty, text, color = RED }: {
  x1: number; y1: number; x2: number; y2: number; tx: number; ty: number; text: string; color?: string;
}) {
  const vertical = x1 === x2;
  return (
    <g fill={color}>
      <path d={`M${x1} ${y1}L${x2} ${y2}`} stroke={color} fill="none" shapeRendering="crispEdges" />
      {vertical && <rect x={x1 - 2} y={ty - 4} width="4" height="8" fill="#fff" />}
      <Arrow x={x1} y={y1} angle={vertical ? -90 : 180} />
      <Arrow x={x2} y={y2} angle={vertical ? 90 : 0} />
      <Label x={tx} y={ty}>{text}</Label>
    </g>
  );
}

/* Aggregate hatch: one speck per cell of a jittered grid. */
const specks = (cols: number, rows: number, pitch: number) => {
  let s = 11;
  const next = () => (s = (s * 16807) % 2147483647) / 2147483647;
  return Array.from({ length: cols * rows }, (_, i) => {
    const x = ((i % cols) + 0.2 + next() * 0.6) * pitch;
    const y = (Math.floor(i / cols) + 0.2 + next() * 0.6) * pitch;
    return i % 3 === 0
      ? `M${x.toFixed(1)} ${y.toFixed(1)}l2 1-1 1`
      : i % 3 === 1
        ? `M${x.toFixed(1)} ${y.toFixed(1)}h2`
        : `M${x.toFixed(1)} ${y.toFixed(1)}l1 1`;
  }).join("");
};

function Drawing() {
  return (
    <svg className="absolute inset-0 h-full w-full" fontFamily="Liberation Sans, sans-serif" fontSize="7" fontWeight="bold">
      <defs>
        <pattern id="hatch" width="3" height="3" patternUnits="userSpaceOnUse">
          <path d="M-1 1 1-1M0 3 3 0M2 4 4 2" stroke="#000" strokeWidth="1" />
        </pattern>
      </defs>
      <g transform="translate(-46 -149)" fill="none">
        <g shapeRendering="crispEdges">
          <path
            stroke={PURPLE}
            d="M359 394.500H1218M793 478.500H1243M1115 503.500H1218M1115.500 394V1040M359.500 775V1040M1218.500 775V1040M1115 672.500H1218M410.500 672V504.500H396.500V798.500H410.500M410.500 672.500H447.500V709.500H410.500z"
          />
          <path stroke={NAVY} d="M359.500 285.500H1218.500V775.500H359.500z" />
          <path
            stroke="#000"
            d="M447 672.500H1115.500V503M410.500 709V775M652.500 672V775.500H873.500V672M1115.500 514.500H1218.500V662.500H1115.500"
          />
          <path stroke="#ffff33" d="M422.500 478.500H793.500V896.500H422.500z" />
          <path stroke={NAVY} d="M422.500 480V504M793.500 480V504M794 478.500H825M795 896.500H825" />
          <path
            stroke={RED}
            d="M359.500 251V283M1218.500 251V283M1220 285.500H1284M1220 775.500H1284M1220 457.500H1248M1220 514.500H1248M1220 662.500H1248M1069 503.500H1114M1069 672.500H1114M1069 775.500H1114M1116 514.500H1155M1116 662.500H1155M1115.500 643V662M1218.500 643V662M385 672.500H409M385 709.500H409M385 775.500H409M410.500 657V672M447.500 657V671M447 661.500H486M410.500 777V804M1115.500 777V804M652.500 759V768M873.500 759V768M795 286.500H801M795 388.500H801"
          />
        </g>

        <g stroke="#000" strokeWidth="1" shapeRendering="crispEdges">
          <path d="M359.500 467 386 441.500 415 417 446 394 469 380 485 369 525 349 560 333 590 321 617 312 638 307 702 292 727 289 770 286.500H823L893 293 927 301 953 308 995 320 1010 325 1050 343 1102 370 1147 397 1183 426 1218 457" />
          <path d="M507 478 537 458 577 438 602 426 630 417 673 403 723 394 770 389.500H820L880 397 948 413 993 429 1025 444 1053 459 1082 478 1115 503" />
          <path d="M447.500 672.500 410.500 709.500" />
          <path d="M1218 672V679L1217 690 1214 702 1211 712 1203 727 1192 742 1177 756 1165 763 1152 769 1140 773 1121 775" />
          <path d="M1153 389.500 1190.500 415.500 1159 461 1121 434.500z" />
          <path d="M359.500 467.500 396.500 504.500 422.500 478.500 397 453" />
          <circle cx="628" cy="301" r="10.500" fill="url(#hatch)" />
          <circle cx="904" cy="288" r="10.500" fill="url(#hatch)" />
        </g>
        <g stroke="#000">
          <path d={specks(7, 9, 6)} transform="matrix(.82 .57 -.57 .82 1153 391)" />
          <path d={specks(6, 6, 6)} transform="matrix(.68 .68 -.68 .68 396 455)" />
        </g>
        <g shapeRendering="crispEdges">
          <path d="M374 453 386 441.500 397 453" stroke={PURPLE} />
          <path d="M395 453 370 480" stroke={PURPLE} />
        </g>

        <g stroke={RED}>
          <path d="M370 480 356 493M344 482 359 468" />
          <path d="M306 469.500H338L369 500.500" />
          <path d="M945 340.500H987.500L995 320" />
          <path d="M899 436.500H942L948.500 413" />
          <path d="M1141 732.500H1181L1192 742" />
        </g>
        <g fill={RED}>
          <Arrow x={347} y={479} angle={45} />
          <Arrow x={358} y={490} angle={225} />
          <Arrow x={995} y={320} angle={-70} />
          <Arrow x={948} y={413} angle={-75} />
          <Arrow x={1192} y={742} angle={41} />
          <Label x={322} y={465}>99.87 mm</Label>
          <Label x={966} y={336}>R4150.00 mm</Label>
          <Label x={919} y={432}>R3450.00 mm</Label>
          <Label x={1160} y={728}>R700.00 mm</Label>
        </g>

        <Dim x1={359.5} y1={255.5} x2={1218.5} y2={255.5} tx={788} ty={251} text="5840.09 mm" />
        <Dim x1={796.5} y1={286.5} x2={796.5} y2={388.5} tx={797} ty={337} text="700.00 mm" />
        <Dim x1={1243.5} y1={457.5} x2={1243.5} y2={514.5} tx={1244} ty={486} text="385.73 mm" />
        <Dim x1={1243.5} y1={514.5} x2={1243.5} y2={662.5} tx={1244} ty={588} text="1005.00 mm" />
        <Dim x1={1279.5} y1={285.5} x2={1279.5} y2={775.5} tx={1280} ty={531} text="3330.43 mm" />
        <Dim x1={1072.5} y1={503.5} x2={1072.5} y2={672.5} tx={1073} ty={588} text="1150.00 mm" />
        <Dim x1={1072.5} y1={672.5} x2={1072.5} y2={775.5} tx={1073} ty={724} text="700.00 mm" />
        <Dim x1={1150.5} y1={514.5} x2={1150.5} y2={662.5} tx={1151} ty={588} text="1005.00 mm" />
        <Dim x1={1115.5} y1={647.5} x2={1218.5} y2={647.5} tx={1167} ty={644} text="700.00 mm" />
        <Dim x1={410.5} y1={661.5} x2={447.5} y2={661.5} tx={468} ty={657} text="250.00 mm" />
        <Dim x1={389.5} y1={672.5} x2={389.5} y2={709.5} tx={389} ty={691} text="250.00 mm" />
        <Dim x1={389.5} y1={709.5} x2={389.5} y2={775.5} tx={389} ty={742} text="450.00 mm" />
        <Dim x1={652.5} y1={763.5} x2={873.5} y2={763.5} tx={763} ty={759} text="1500.00 mm" />
        <Dim x1={410.5} y1={799.5} x2={1115.5} y2={799.5} tx={763} ty={795} text="4789.77 mm" />
        <Dim x1={422.5} y1={499.5} x2={793.5} y2={499.5} tx={608} ty={495} text="2526.20 mm" color={NAVY} />
        <Dim x1={820.5} y1={478.5} x2={820.5} y2={896.5} tx={821} ty={687} text="2842.19 mm" color={NAVY} />
      </g>
    </svg>
  );
}

/* ---------- scroll bars, tabs, property fields ---------- */

function ScrollButton({ label, d, vertical = false }: { label: string; d: string; vertical?: boolean }) {
  return (
    <button
      type="button"
      aria-label={label}
      className={
        vertical
          ? "flex h-4 w-full shrink-0 items-center justify-center border border-[#3c3c3c] bg-[#505050]"
          : "flex h-full w-[17px] shrink-0 items-center justify-center border border-[#3c3c3c] bg-[#505050]"
      }
    >
      <svg viewBox="0 0 6 6" className="size-[6px]" aria-hidden="true">
        <path d={d} fill="#fff" />
      </svg>
    </button>
  );
}

function PaperIcon({ n }: { n: number }) {
  return (
    <svg viewBox="0 0 11 12" className="h-3 w-[11px] shrink-0" aria-hidden="true">
      <path d="M0 0h8l3 3v9H0z" fill="#fff" />
      <path d="M8 0v3h3" fill="none" stroke="#222" />
      <text x="3" y="10" fontSize="9" fontWeight="bold" fill="#101070" fontFamily="Liberation Sans, sans-serif">
        {n}
      </text>
    </svg>
  );
}

const fields: { label: string; value: string; spin?: boolean }[] = [
  { label: "Scale X", value: "1", spin: true },
  { label: "Scale Y", value: "1", spin: true },
  { label: "Size X", value: "0 mm" },
  { label: "Size Y", value: "0 mm" },
  { label: "Pos X", value: "0 mm" },
  { label: "Pos Y", value: "0 mm" },
  { label: "Delta X", value: "0 mm" },
  { label: "Delta Y", value: "0 mm" },
  { label: "Rot", value: "0", spin: true },
  { label: "Delta Rot", value: "0", spin: true },
  { label: "Delta Distance", value: "0 mm" },
  { label: "Delta Angle", value: "0", spin: true },
];

function Field({ label, value, spin }: { label: string; value: string; spin?: boolean }) {
  const id = label.toLowerCase().replace(" ", "-");
  return (
    <div className="flex w-[94px] shrink-0 flex-col pr-1 last:w-[91px] last:pr-px">
      <label htmlFor={id} className="h-4 text-[11px] leading-4 whitespace-nowrap text-white">
        {label}
      </label>
      <div className="flex h-[21px] border border-[#8e8e8e]">
        <input id={id} defaultValue={value} disabled className="w-0 grow bg-transparent px-1 text-xs text-[#6f6f6f]" />
        {spin && (
          <div className="flex w-4 shrink-0 flex-col gap-px">
            <button type="button" aria-label={`${label} up`} className="flex h-[9px] items-center justify-center border border-[#161616]">
              <svg viewBox="0 0 4 2" className="h-[2px] w-1" aria-hidden="true">
                <path d="M0 2h4L2 0z" fill="#111" />
              </svg>
            </button>
            <button type="button" aria-label={`${label} down`} className="flex h-[9px] items-center justify-center border border-[#161616]">
              <svg viewBox="0 0 4 2" className="h-[2px] w-1" aria-hidden="true">
                <path d="M0 0h4L2 2z" fill="#111" />
              </svg>
            </button>
          </div>
        )}
      </div>
    </div>
  );
}

const rowClass = "flex shrink-0 items-center overflow-hidden border-t border-[#858585] bg-[#484848]";

export default function App() {
  return (
    <div className="flex h-screen flex-col overflow-hidden bg-[#383838] pt-[5px] font-['Open_Sans','Noto_Sans',sans-serif] text-white">
      <header className="flex shrink-0 flex-col">
        <div className={`${rowClass} h-8`}>
          <Grip wide />
          <Tools items="new open save | print preview | cut:d copy:d paste brush | undo redo:d repeat | zoomin zoomout zoomwin:d extents page:d zoomsel:d | spell:m | grid:am | snap:am plane:am | layerset:m shapes:dm | props:m |" />
          <Combo label="Command" className="w-[302px]" />
          <Tools items="help:m book mail" />
          <div className="ml-[3px] flex h-full items-center border-l border-[#858585]">
            <Grip wide />
            <Tools items="dup:d array4:d polar:d dup:d arraysm:d flower:d mirror:d triangles:d steps:d" />
          </div>
          <div className="ml-[2px] flex h-full items-center border-l border-[#858585]">
            <Grip wide />
            <Tools items="union:d subtract:d intersect:d slice:d | join joinb" />
          </div>
        </div>
        <div className={`${rowClass} h-8`}>
          <Grip />
          <Tools items="gear layers" />
          <div className="ml-[2px] flex gap-px">
            <Combo label="Layer" className="w-[296px]" />
            <Combo label="Colour" className="w-[99px]" />
            <Combo label="Line style" className="w-[99px]" />
            <Combo label="Line width" className="w-[99px]" filled />
            <Combo label="Brush" className="w-[117px]" />
            <Combo label="Brush style" className="w-[99px]" />
          </div>
          <Separator />
          <div className="ml-px flex gap-px">
            <Combo label="Text style" className="w-[99px]" />
            <Combo label="Text size" className="w-[99px]" filled />
          </div>
          <Tools items="pencil pancake:am" />
          <div className="ml-[2px] flex h-full items-center border-l border-[#858585]">
            <Grip wide />
            <Tools items="dimall ruler dimpar:d dimalign dimhatch dimbase dimcont dimord dimang dimrad dimdia leader leader2 q:d dimdiag redtable" />
          </div>
        </div>
        <div className={`${rowClass} h-8 w-fit pr-px`}>
          <Grip />
          <Tools items="tag1 tag2 tag3 stamp stampred cylinder revolve | curve:d solid1:d solid2:d marquee:d | sweep:d pipe channel facet:d bend1:d bend2:d cone:d bend3:d bend4:d twist:d | section | box:d boxcurve:d mirrorc:d column:d cubeball:d" />
        </div>
        <div className="flex h-[31px]">
          <div className={`${rowClass} pr-[2px]`}>
            <Grip />
            <Tools items="steps:d" />
          </div>
          <div className={`${rowClass} border-l pr-[2px]`}>
            <Grip wide />
            <Tools items="panel:d" />
          </div>
        </div>
      </header>

      <main className="flex min-h-0 grow">
        <aside className="w-[30px] shrink-0 pt-px">
          <div className="flex w-[29px] flex-col border-t border-[#858585] bg-[#484848] pb-[2px]">
            <div className="flex h-[10px] items-center pl-[2px]">
              <div className="w-5 border-t-2 border-dotted border-[#8c8c8c]" />
            </div>
            <Tools
              vertical
              items="cursor:am node line:m rect:m circle:m arc:m dot:m text:m lock:m copyred:m | threed:m sphere:m prism:m balls:m | ruler:m | slab:m gearblue:m | groupwin:m groupin:dm pickbox:dm swap:m | shapes:dm"
            />
          </div>
        </aside>

        <section className="flex min-w-0 grow flex-col pt-[2px]">
          <div className="flex h-[15px] shrink-0 border-t border-b border-[#858585] bg-[#555]">
            <div className="flex w-[14px] shrink-0 items-center justify-center bg-[#b4b4a6]">
              <svg viewBox="0 0 12 12" className="size-3" aria-hidden="true">
                <path d="M5 12V2M2 5l3-3 3 3M10 11h2" stroke="#000" strokeWidth="1.500" fill="none" />
              </svg>
            </div>
            <div className="min-w-0 grow">
              <TopRuler />
            </div>
          </div>
          <div className="flex min-h-0 grow">
            <div className="w-4 shrink-0 border-r-2 border-l border-[#858585] border-r-[#d8d8d8] bg-[#555]">
              <SideRuler />
            </div>
            <div className="flex min-w-0 grow flex-col">
              <div className="flex min-h-0 grow">
                <div className="relative min-w-0 grow overflow-hidden border-b-2 border-[#e4e6e4] bg-white">
                  <Drawing />
                </div>
                <div className="flex w-4 shrink-0 flex-col bg-[#6e6e6e]">
                  <ScrollButton vertical label="Scroll up" d="M0 5h6L3 2z" />
                  <div className="relative grow">
                    <div className="absolute top-[22.5%] h-[9%] w-full border border-[#3c3c3c] bg-[#505050]" />
                  </div>
                  <ScrollButton vertical label="Scroll down" d="M0 1h6L3 4z" />
                </div>
              </div>
              <div className="flex h-[18px] shrink-0 bg-[#484848]">
                <nav className="flex w-[379px] shrink-0 pl-[5px] text-[11px] leading-4">
                  <button type="button" className="flex w-[66px] items-center gap-1 rounded-b-sm border-r border-b border-black bg-[#6a6a6a] pl-[5px]">
                    <svg viewBox="0 0 12 12" className="size-3 shrink-0" aria-hidden="true">
                      <path d="m0 2 3-2h5v5L6 8H0z" fill="#e8e8e8" stroke="#000" />
                      <circle cx="8" cy="8" r="3.500" fill="#fff" stroke="#000" />
                    </svg>
                    Model
                  </button>
                  {[1, 2, 3, 4].map((n) => (
                    <button key={n} type="button" className="mb-[2px] flex w-[71px] items-center gap-[5px] border-r border-[#3c3c3c] bg-[#505050] pl-[6px] text-[#b4b4b4]">
                      <PaperIcon n={n} />
                      <span className="h-[11px] overflow-hidden leading-3">Paper {n}</span>
                    </button>
                  ))}
                </nav>
                <div className="w-[3px] shrink-0 bg-[#ececec]" />
                <div className="ml-px flex min-w-0 grow bg-[#6e6e6e]">
                  <ScrollButton label="Scroll left" d="M5 0v6L2 3z" />
                  <div className="relative grow">
                    <div className="absolute left-[71.8%] h-full w-[8%] border border-[#3c3c3c] bg-[#505050]" />
                  </div>
                  <ScrollButton label="Scroll right" d="M1 0v6l3-3z" />
                </div>
                <div className="w-4 shrink-0" />
              </div>
            </div>
          </div>
        </section>
      </main>

      <footer className="flex h-[42px] shrink-0 items-center overflow-hidden border-t border-b border-t-[#858585] border-b-[#333] bg-[#484848]">
        <Grip />
        <Tools items="wizard cross:d table:d |" />
        <div className="flex h-full items-start bg-[#535353] pl-[2px]">
          {fields.map((f) => (
            <Field key={f.label} {...f} />
          ))}
        </div>
        <Separator />
        <Tools items="b1 b2 b3 | sel1:a sel2 sel3 sel4 | und2 swapc tri2 press:d bbox" />
      </footer>
    </div>
  );
}
